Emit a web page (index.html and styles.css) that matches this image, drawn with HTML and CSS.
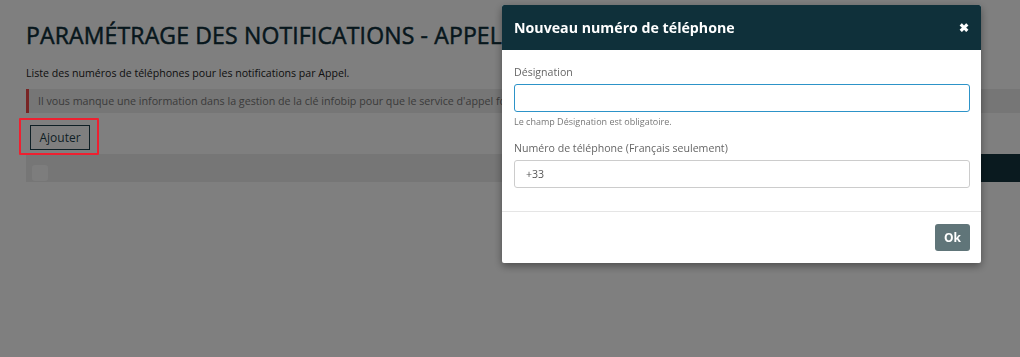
FILE: index.html
```html
<!DOCTYPE html>
<html lang="fr">
<head>
<meta charset="utf-8">
<link rel="stylesheet" href="styles.css">
</head>
<body>
<div class="page">
  <h1 class="title">PARAMÉTRAGE DES NOTIFICATIONS - APPELS</h1>
  <p class="intro">Liste des numéros de téléphones pour les notifications par Appel.</p>
  <div class="alert">Il vous manque une information dans la gestion de la clé infobip pour que le service d'appel fonctionne.</div>
  <div class="actions"><button class="btn-add">Ajouter</button></div>
  <div class="table-row">
    <div class="cell-light"><span class="checkbox"></span></div>
    <div class="cell-dark"></div>
  </div>
</div>
<div class="overlay"></div>
<div class="highlight"></div>
<div class="modal">
  <div class="modal-header">
    <span class="modal-title">Nouveau numéro de téléphone</span>
    <span class="close">&#x2716;</span>
  </div>
  <div class="modal-body">
    <label class="label">Désignation</label>
    <div class="input focus"></div>
    <div class="help">Le champ Désignation est obligatoire.</div>
    <label class="label second">Numéro de téléphone (Français seulement)</label>
    <div class="input">+33</div>
  </div>
  <div class="modal-footer">
    <button class="btn-ok">Ok</button>
  </div>
</div>
</body>
</html>
```

FILE: styles.css
```css
html, body {
  margin: 0;
  padding: 0;
  background: #ffffff;
  width: 1020px;
  height: 357px;
  overflow: hidden;
  font-family: "Open Sans", "Noto Sans", sans-serif;
}
.page {
  padding: 20px 0 0 26px;
  overflow: hidden;
}
.title {
  margin: 0;
  font-size: 23px;
  font-weight: 400;
  letter-spacing: 0.15px;
  -webkit-text-stroke: 0.5px #0f2f3a;
  color: #0f2f3a;
  line-height: 30px;
  white-space: nowrap;
}
.intro {
  margin: 15px 0 0;
  font-size: 10.6px;
  line-height: 16px;
  color: #222;
}
.alert {
  margin-top: 8px;
  height: 24px;
  line-height: 24px;
  background: #ececec;
  border-left: 3px solid #f04848;
  padding-left: 9px;
  font-size: 10.7px;
  color: #777;
  white-space: nowrap;
  overflow: hidden;
}
.actions {
  padding: 12px 0 4px 4px;
  height: 25px;
}
.btn-add {
  display: block;
  height: 25px;
  width: 60px;
  border: 1px solid #1d3e4a;
  background: #ffffff;
  font-family: inherit;
  font-size: 12px;
  color: #1d3e4a;
  padding: 0;
}
.table-row {
  display: flex;
  height: 28px;
}
.cell-light {
  width: 700px;
  background: #ececec;
  display: flex;
  align-items: flex-end;
  padding: 0 0 1px 6px;
}
.checkbox {
  width: 16px;
  height: 16px;
  background: #fafafa;
  border-radius: 3px;
}
.cell-dark {
  flex: 1;
  background: #14353f;
}
.overlay {
  position: fixed;
  inset: 0;
  background: rgba(0, 0, 0, 0.5);
}
.highlight {
  position: fixed;
  left: 19px;
  top: 118px;
  width: 76px;
  height: 33px;
  border: 2px solid #ee2030;
  border-radius: 1px;
}
.modal {
  position: fixed;
  left: 502px;
  top: 5px;
  width: 479px;
  background: #ffffff;
  box-shadow: 0 3px 9px rgba(0, 0, 0, 0.4);
  border-radius: 2px;
  overflow: hidden;
}
.modal-header {
  height: 45px;
  background: #0f303a;
  display: flex;
  align-items: center;
  justify-content: space-between;
  padding: 0 12px;
}
.modal-title {
  color: #ffffff;
  font-weight: 700;
  font-size: 14.2px;
}
.close {
  color: #ffffff;
  font-size: 12px;
  font-weight: 700;
}
.modal-body {
  padding: 14px 11px 23px 12px;
  border-bottom: 1px solid #e5e5e5;
  display: flex;
  flex-direction: column;
}
.label {
  font-size: 10.6px;
  line-height: 16px;
  color: #666;
}
.label.second {
  margin-top: 11px;
}
.input {
  margin-top: 4px;
  height: 26px;
  border: 1px solid #cccccc;
  border-radius: 3px;
  font-size: 10.6px;
  line-height: 26px;
  padding-left: 11px;
  color: #555;
}
.input.focus {
  border-color: #2d93c8;
}
.help {
  margin-top: 3px;
  font-size: 9px;
  color: #777;
  line-height: 14px;
}
.modal-footer {
  display: flex;
  justify-content: flex-end;
  padding: 12px 11px 12px;
}
.btn-ok {
  width: 35px;
  height: 27px;
  border: none;
  border-radius: 3px;
  background: #607579;
  color: #ffffff;
  font-family: inherit;
  font-weight: 700;
  font-size: 12px;
  padding: 0;
}
```
